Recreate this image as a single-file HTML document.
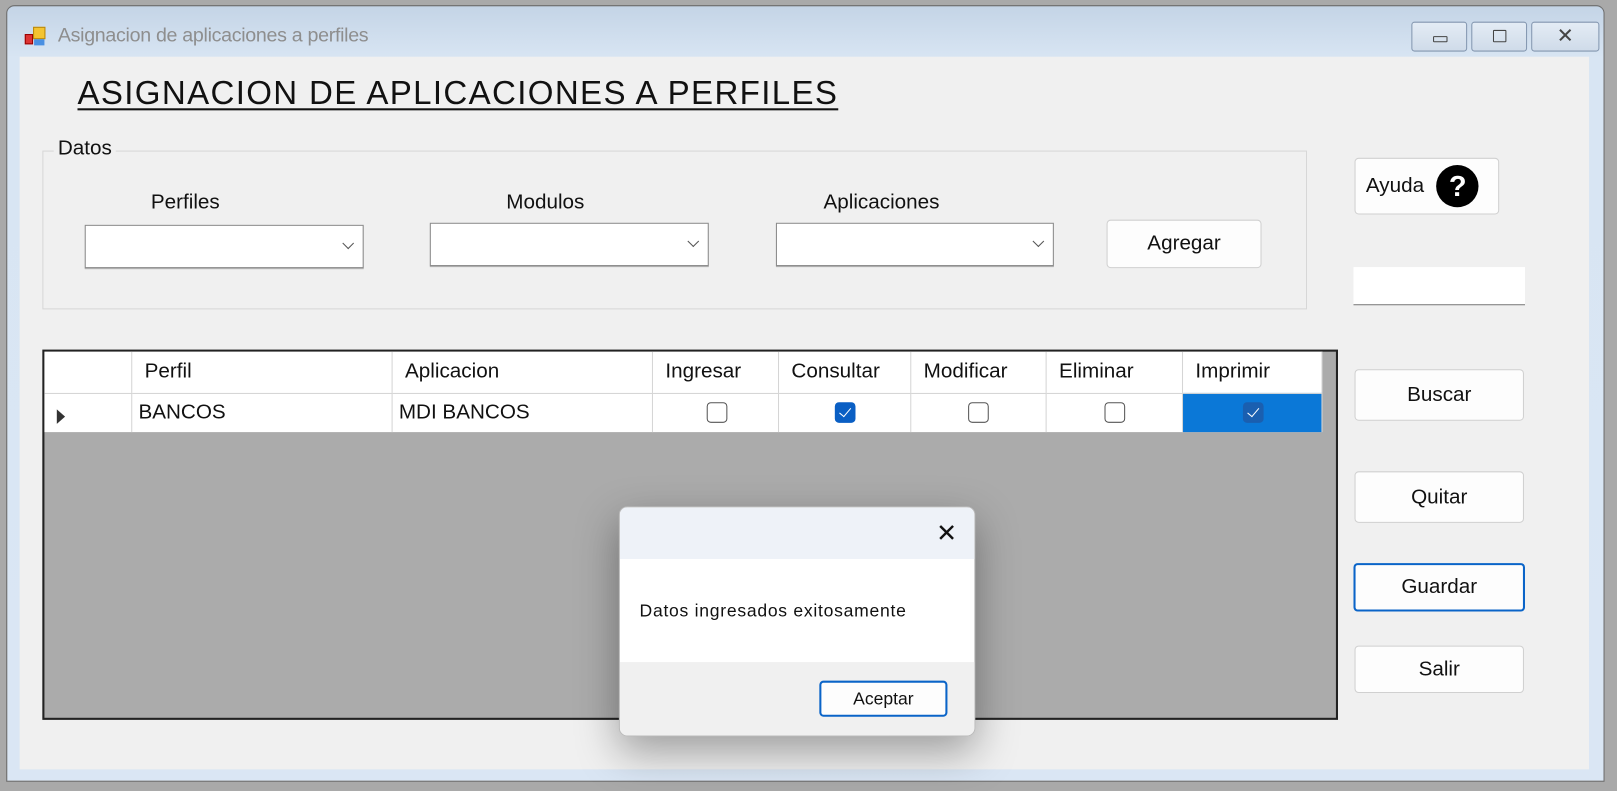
<!DOCTYPE html>
<html><head><meta charset="utf-8"><style>
*{box-sizing:border-box;margin:0;padding:0}
html,body{width:1617px;height:791px;overflow:hidden;background:#a9a9a9;font-family:"Liberation Sans",sans-serif}
#s{position:absolute;left:0;top:0;width:1565px;height:767px;transform:scale(1.0332,1.0313);transform-origin:0 0}
.a{position:absolute}
.btn{position:absolute;background:#fdfdfd;border:1px solid #d0d0d0;border-radius:4px;font-size:20px;color:#111;display:flex;align-items:center;justify-content:center}
.cb{position:absolute;background:#fff;border:1px solid #8a8a8a;box-shadow:0 1px 0 #aaa}
.cb:after{content:"";position:absolute;right:10px;top:13px;width:7px;height:7px;border-right:1.3px solid #555;border-bottom:1.3px solid #555;transform:rotate(45deg)}
.lbl{position:absolute;font-size:20px;color:#111}
.hd{position:absolute;top:0;height:40px;border-right:1px solid #d5d5d5;font-size:20px;padding:8px 0 0 12px;color:#111}
.cl{position:absolute;top:40px;height:38px;border-right:1px solid #d5d5d5;border-top:1px solid #d5d5d5;font-size:20px;padding:7px 0 0 6px;color:#111}
.ck{position:absolute;top:49px;width:20px;height:20px;border:1.5px solid #555;border-radius:4px;background:#fff}
.ck.on{background:#0a5fc4;border-color:#0a5fc4}
.ck.on:after{content:"";position:absolute;left:6px;top:2px;width:5px;height:10px;border-right:1.5px solid #fff;border-bottom:1.5px solid #fff;transform:rotate(40deg)}
</style></head><body><div id="s">
<div class="a" style="left:6px;top:5px;width:1547px;height:753px;border:1px solid #6d6d6d;border-radius:8px 8px 0 0;background:linear-gradient(#c4d4e6,#d8e5f3 50px,#dae6f4)"></div>
<div class="a" style="left:24px;top:26px;width:22px;height:20px">
<div class="a" style="left:0;top:7px;width:8px;height:10px;background:#d33;border:1px solid #900"></div>
<div class="a" style="left:8px;top:0;width:12px;height:12px;background:#f4c430;border:1px solid #b8860b"></div>
<div class="a" style="left:9px;top:12px;width:10px;height:6px;background:#4a90e2"></div></div>
<div class="a" style="left:56px;top:24px;font-size:19px;color:#8e8e8e;letter-spacing:-0.3px">Asignacion de aplicaciones a perfiles</div>
<div class="a" style="left:1366px;top:21px;width:54px;height:29px;border:1px solid #8497b0;border-radius:3px;background:linear-gradient(#e4ecf5,#cfdbe9)"><div class="a" style="left:20px;top:13px;width:14px;height:6px;border:1.5px solid #444;border-radius:1px"></div></div>
<div class="a" style="left:1424px;top:21px;width:54px;height:29px;border:1px solid #8497b0;border-radius:3px;background:linear-gradient(#e4ecf5,#cfdbe9)"><div class="a" style="left:20px;top:7px;width:13px;height:12px;border:1.5px solid #444;border-radius:1px"></div></div>
<div class="a" style="left:1482px;top:21px;width:66px;height:29px;border:1px solid #8497b0;border-radius:3px;background:linear-gradient(#e4ecf5,#cfdbe9);font-size:20px;text-align:center;line-height:26px;color:#444">✕</div>
<div class="a" style="left:19px;top:55px;width:1519px;height:691px;background:#f0f0f0"></div>
<div class="a" style="left:75px;top:72px;font-size:32px;color:#111;text-decoration:underline;text-decoration-thickness:2px;text-underline-offset:4px;letter-spacing:1.3px">ASIGNACION DE APLICACIONES A PERFILES</div>
<div class="a" style="left:41px;top:146px;width:1224px;height:154px;border:1px solid #d7d7d7"></div>
<div class="lbl" style="left:52px;top:133px;background:#f0f0f0;padding:0 4px">Datos</div>
<div class="lbl" style="left:146px;top:185px">Perfiles</div>
<div class="lbl" style="left:490px;top:185px">Modulos</div>
<div class="lbl" style="left:797px;top:185px">Aplicaciones</div>
<div class="cb" style="left:82px;top:218px;width:270px;height:42px"></div>
<div class="cb" style="left:416px;top:216px;width:270px;height:42px"></div>
<div class="cb" style="left:751px;top:216px;width:269px;height:42px"></div>
<div class="btn" style="left:1071px;top:213px;width:150px;height:47px">Agregar</div>
<div class="btn" style="left:1311px;top:153px;width:140px;height:55px;justify-content:flex-start;padding-left:10px">Ayuda<span style="display:inline-block;margin-left:12px;width:41px;height:41px;border-radius:50%;background:#000;color:#fff;font-weight:bold;font-size:28px;text-align:center;line-height:41px">?</span></div>
<div class="a" style="left:1310px;top:259px;width:166px;height:37px;background:#fff;border-bottom:1.5px solid #777"></div>
<div class="a" style="left:41px;top:339px;width:1254px;height:359px;border:2px solid #222;background:#ababab">
<div class="a" style="left:0;top:0;width:1237px;height:78px;background:#fff"></div>
<div class="hd" style="left:0;width:85px"></div>
<div class="hd" style="left:85px;width:252px">Perfil</div>
<div class="hd" style="left:337px;width:252px">Aplicacion</div>
<div class="hd" style="left:589px;width:122px">Ingresar</div>
<div class="hd" style="left:711px;width:128px">Consultar</div>
<div class="hd" style="left:839px;width:131px">Modificar</div>
<div class="hd" style="left:970px;width:132px">Eliminar</div>
<div class="hd" style="left:1102px;width:135px">Imprimir</div>
<div class="cl" style="left:0;width:85px"><span style="display:inline-block;margin:8px 0 0 6px;border-left:8px solid #333;border-top:7px solid transparent;border-bottom:7px solid transparent"></span></div>
<div class="cl" style="left:85px;width:252px">BANCOS</div>
<div class="cl" style="left:337px;width:252px">MDI BANCOS</div>
<div class="cl" style="left:589px;width:122px"></div>
<div class="cl" style="left:711px;width:128px"></div>
<div class="cl" style="left:839px;width:131px"></div>
<div class="cl" style="left:970px;width:132px"></div>
<div class="cl" style="left:1102px;width:135px;background:#0b78d7"></div>
<div class="ck" style="left:641px"></div>
<div class="ck on" style="left:765px"></div>
<div class="ck" style="left:894px"></div>
<div class="ck" style="left:1026px"></div>
<div class="ck on" style="left:1160px;background:#1a5fb0;border-color:#1a5fb0"></div>
</div>
<div class="btn" style="left:1311px;top:358px;width:164px;height:50px">Buscar</div>
<div class="btn" style="left:1311px;top:457px;width:164px;height:50px">Quitar</div>
<div class="btn" style="left:1310px;top:546px;width:166px;height:47px;border:2px solid #0a64c8">Guardar</div>
<div class="btn" style="left:1311px;top:626px;width:164px;height:46px">Salir</div>
<div class="a" style="left:599px;top:491px;width:345px;height:223px;border-radius:8px;overflow:hidden;border:1px solid #bbb;box-shadow:0 15px 40px rgba(0,0,0,.35);background:#fff">
<div class="a" style="left:0;top:0;width:345px;height:50px;background:#eef2f8"></div>
<div class="a" style="left:306px;top:11px;font-size:24px;color:#111">✕</div>
<div class="a" style="left:19px;top:91px;font-size:17px;color:#111;letter-spacing:0.7px">Datos ingresados exitosamente</div>
<div class="a" style="left:0;top:150px;width:345px;height:73px;background:#f0f0f0"></div>
<div class="a" style="left:193px;top:168px;width:124px;height:35px;border:2px solid #0a64c8;border-radius:4px;background:#fdfdfd;font-size:17px;text-align:center;line-height:31px;color:#111">Aceptar</div>
</div>
</div></body></html>
